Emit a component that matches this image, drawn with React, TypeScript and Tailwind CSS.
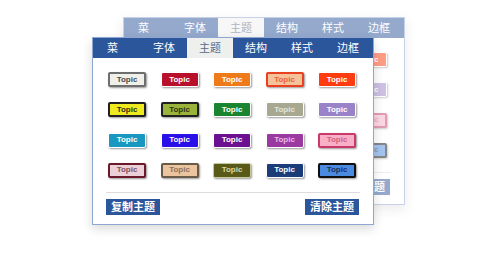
import React from "react";

type Topic = { bg: string; border: string; text: string };

// each theme swatch, row by row
const topics: Topic[] = [
  { bg: "bg-[#f0f0ea]", border: "border-2 border-[#6e6e6e]", text: "text-[#4a4a4a]" },
  { bg: "bg-[#b8102a]", border: "border border-white", text: "text-white" },
  { bg: "bg-[#ef7a1a]", border: "border border-white", text: "text-white" },
  { bg: "bg-[#f5c39a]", border: "border-2 border-[#e84020]", text: "text-[#e86040]" },
  { bg: "bg-[#ff3c10]", border: "border border-white", text: "text-white" },

  { bg: "bg-[#eeea20]", border: "border-2 border-[#202020]", text: "text-[#303010]" },
  { bg: "bg-[#9ab43a]", border: "border-2 border-[#202020]", text: "text-[#303010]" },
  { bg: "bg-[#1a8530]", border: "border border-white", text: "text-white" },
  { bg: "bg-[#a8a890]", border: "border border-white", text: "text-[#e4e4d8]" },
  { bg: "bg-[#9a82c8]", border: "border border-white", text: "text-white" },

  { bg: "bg-[#1898c0]", border: "border border-white", text: "text-white" },
  { bg: "bg-[#2a10e8]", border: "border border-white", text: "text-white" },
  { bg: "bg-[#6a1090]", border: "border border-white", text: "text-white" },
  { bg: "bg-[#9a3aa0]", border: "border border-white", text: "text-[#ecb8e4]" },
  { bg: "bg-[#f8b0c8]", border: "border-2 border-[#c83a6a]", text: "text-[#d06080]" },

  { bg: "bg-[#ecd0d8]", border: "border-2 border-[#6a1a2a]", text: "text-[#805060]" },
  { bg: "bg-[#ebc4a0]", border: "border-2 border-[#6a5a48]", text: "text-[#907060]" },
  { bg: "bg-[#5a5a18]", border: "border border-[#c8c8a0]", text: "text-[#d8d8a8]" },
  { bg: "bg-[#1a3c78]", border: "border border-white", text: "text-white" },
  { bg: "bg-[#4a8ae0]", border: "border-2 border-[#101010]", text: "text-[#1a3060]" },
];

const tabs = ["字体", "主题", "结构", "样式", "边框"];

function Panel({ className }: { className: string }) {
  return (
    <div
      className={`absolute w-[282px] h-[188px] bg-white border border-[#8fa7d0] shadow-[0_4px_10px_rgba(0,0,0,0.15)] flex flex-col ${className}`}
    >
      {/* Tabs */}
      <div className="flex h-[20px] bg-[#2b569b] text-white text-[11px] leading-[20px] shrink-0">
        <div className="w-[48px] pl-[14px]">菜</div>
        {tabs.map((t) => (
          <div
            key={t}
            className={`w-[46px] text-center ${t === "主题" ? "bg-[#eef0ee] text-[#5a6a8a]" : ""}`}
          >
            {t}
          </div>
        ))}
      </div>

      <div className="px-[13px] pt-[14px] flex flex-col">
        {/* Theme grid */}
        <div className="pl-[2px] grid grid-cols-[repeat(5,38px)] gap-x-[14.5px] gap-y-[15.3px]">
          {topics.map((t, i) => (
            <div
              key={i}
              className={`h-[15px] rounded-[2px] flex items-center justify-center font-bold text-[8px] shadow-[1px_1px_2px_rgba(0,0,0,0.4)] ${t.bg} ${t.border} ${t.text}`}
            >
              Topic
            </div>
          ))}
        </div>

        <div className="mt-[14px] h-px bg-[#dcdcdc]" />

        <div className="mt-[6px] flex justify-between text-[11px] font-bold text-white">
          <div className="h-[16px] leading-[16px] px-[5px] bg-[#2b569b]">复制主题</div>
          <div className="h-[16px] leading-[16px] px-[5px] bg-[#2b569b] mr-[1px]">清除主题</div>
        </div>
      </div>
    </div>
  );
}

export default function App() {
  return (
    <div
      className="relative w-[489px] h-[272px] bg-white overflow-hidden"
      style={{ fontFamily: '"Liberation Sans", "Noto Sans CJK SC", sans-serif' }}
    >
      <Panel className="left-[123px] top-[17px] opacity-50" />
      <Panel className="left-[92px] top-[37px]" />
    </div>
  );
}
